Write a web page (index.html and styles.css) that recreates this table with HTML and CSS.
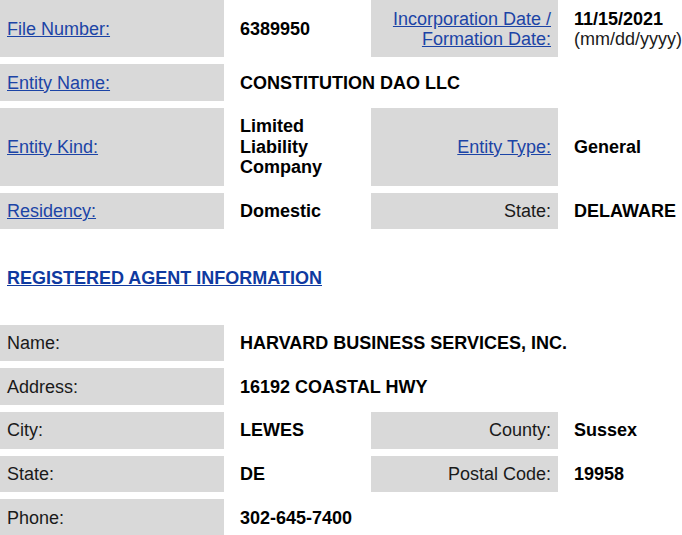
FILE: index.html
```html
<!DOCTYPE html>
<html lang="en">
<head>
<meta charset="utf-8">
<title>Entity Details</title>
<link rel="stylesheet" href="styles.css">
</head>
<body>
<div class="page">
  <div class="grid">
    <div class="cell label"><a href="#">File Number:</a></div>
    <div class="cell value">6389950</div>
    <div class="cell label right"><a href="#">Incorporation Date /<br>Formation Date:</a></div>
    <div class="cell value date">11/15/2021<br><span class="fmt">(mm/dd/yyyy)</span></div>

    <div class="cell label"><a href="#">Entity Name:</a></div>
    <div class="cell value span3">CONSTITUTION DAO LLC</div>

    <div class="cell label"><a href="#">Entity Kind:</a></div>
    <div class="cell value">Limited Liability Company</div>
    <div class="cell label right"><a href="#">Entity Type:</a></div>
    <div class="cell value">General</div>

    <div class="cell label"><a href="#">Residency:</a></div>
    <div class="cell value">Domestic</div>
    <div class="cell label right">State:</div>
    <div class="cell value">DELAWARE</div>
  </div>

  <h2 class="section-title"><a href="#">REGISTERED AGENT INFORMATION</a></h2>

  <div class="grid">
    <div class="cell label">Name:</div>
    <div class="cell value span3">HARVARD BUSINESS SERVICES, INC.</div>

    <div class="cell label">Address:</div>
    <div class="cell value span3">16192 COASTAL HWY</div>

    <div class="cell label">City:</div>
    <div class="cell value">LEWES</div>
    <div class="cell label right">County:</div>
    <div class="cell value">Sussex</div>

    <div class="cell label">State:</div>
    <div class="cell value">DE</div>
    <div class="cell label right">Postal Code:</div>
    <div class="cell value">19958</div>

    <div class="cell label">Phone:</div>
    <div class="cell value span3">302-645-7400</div>
  </div>
</div>
</body>
</html>
```

FILE: styles.css
```css
html, body {
  margin: 0;
  padding: 0;
  overflow: hidden;
  background: #ffffff;
}

body {
  font-family: "Liberation Sans", Arial, sans-serif;
  font-size: 18px;
  line-height: 20.6px;
  color: #1a1a1a;
}

.page {
  width: 720px;
}

.grid {
  display: grid;
  grid-template-columns: 224px 133px 187px 150px;
  gap: 7px;
}

.cell {
  display: flex;
  align-items: center;
  padding: 8.5px 8px 7.5px;
}

.label {
  background: #d9d9d9;
  padding-left: 7px;
  color: #1a1a1a;
}

.label.right {
  justify-content: flex-end;
  text-align: right;
  padding-right: 7px;
}

.value {
  font-weight: bold;
  color: #000;
  padding-left: 9px;
}

.value.date {
  display: block;
}

.fmt {
  font-weight: normal;
  color: #1a1a1a;
}

.span3 {
  grid-column: 2 / 5;
}

a {
  color: #1c44a6;
  text-decoration: underline;
}

.section-title {
  margin: 38.5px 0 36.5px;
  padding-left: 7px;
  font-size: 18px;
  font-weight: bold;
  line-height: 20.6px;
}

.section-title a {
  color: #0f3aa0;
}
```
